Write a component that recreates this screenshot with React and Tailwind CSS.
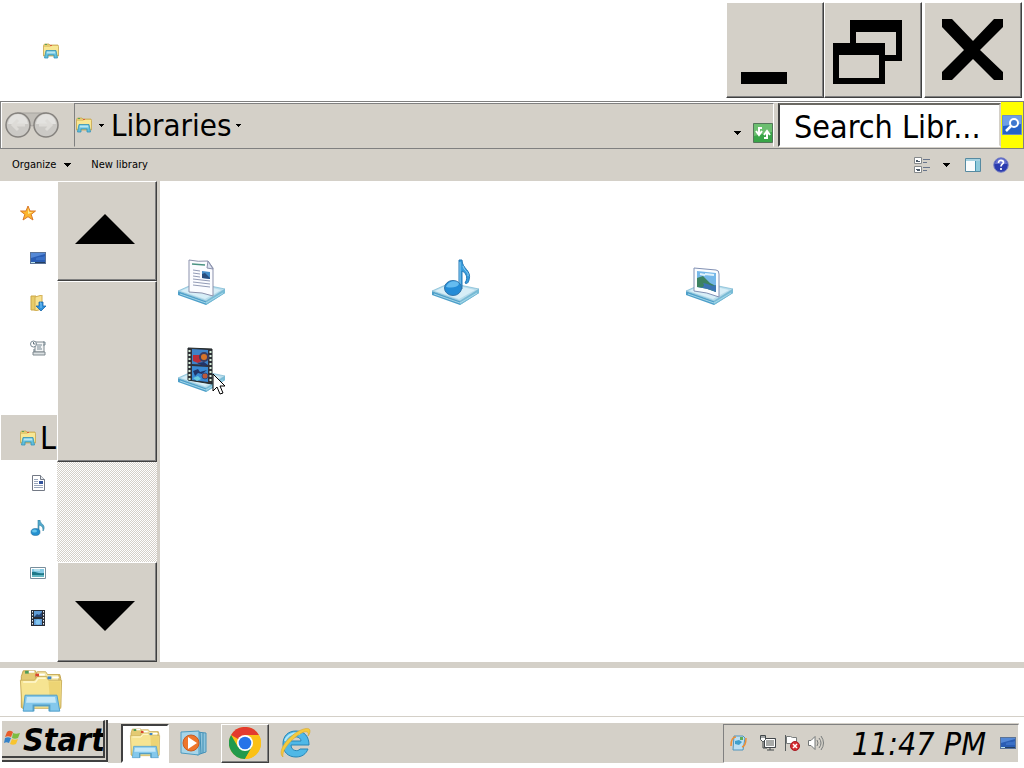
import React, { useState } from 'react';

const raised = 'border border-t-white border-l-white border-r-[#404040] border-b-[#404040] bg-[#d4d0c8] shadow-[inset_-1px_-1px_0_#808080]';
const sunken = 'border-2 border-t-[#404040] border-l-[#404040] border-r-white border-b-white';

const Caret = ({ className }) => (
  <svg viewBox="0 0 8 4" className={className} shapeRendering="crispEdges">
    <path d="M0 0h8L4 4z" fill="#000" />
  </svg>
);

const FolderIcon = ({ className }) => (
  <svg viewBox="0 0 48 48" className={className}>
    <path d="M3 9 5 3h13l2 4h24l1 4v31H3z" fill="#e3ca72" stroke="#c2a14c" />
    <path d="M18 8l2-4h9l2 3h12v8H18z" fill="#f4e8a8" stroke="#c9ab58" />
    <path d="M2 13h15l3-4h10l2 4h14l-1 30H4z" fill="#f6e492" stroke="#cbb05c" />
    <path d="M5 15h13l3-4h8" fill="none" stroke="#fff8cf" strokeWidth="1.5" />
    <path d="M32 14h13l-1 28H34z" fill="#eacd68" opacity=".7" />
    <path d="M7 3h4v3H7z" fill="#4e9b57" />
    <path d="M18 6h4v3h-4z" fill="#d9452f" />
    <path d="M31 9h4v3h-4z" fill="#3d85c9" />
    <path d="M22 7h6M36 10h7M11 4h6" stroke="#fff" strokeWidth="2" />
    <path d="M7 29h34l3 17H33v-6H16v6H5z" fill="#84c8ec" stroke="#4b9cc8" />
    <path d="M9 31h30l1 6H8z" fill="#c5e8f8" />
    <path d="M16 46v-6h17v6" fill="none" stroke="#559fc5" strokeWidth="2" />
  </svg>
);

const SmallFolderIcon = ({ className }) => (
  <svg viewBox="0 0 16 16" className={className}>
    <path d="M.5 2.500 1.500 1H6l1 1h8l.5 1.500V13h-15z" fill="#e5cb70" stroke="#c9a850" strokeWidth=".8" />
    <path d="M1 4h6l1-1h7v9H1z" fill="#f8e794" />
    <path d="M2 1.500h2" stroke="#5aa35c" />
    <path d="M7 2.500h2" stroke="#d9633f" />
    <path d="M3 7.500h10l1.500 7.500H11v-3H5v3H1.500z" fill="#62bfdc" stroke="#3292b8" strokeWidth=".8" strokeLinejoin="round" />
    <path d="M4 8.500h8l.5 2h-9z" fill="#b5e6f2" />
  </svg>
);

const StarIcon = ({ className }) => (
  <svg viewBox="0 0 16 16" className={className}>
    <path d="m8 1 2 5h5.500l-4.300 3.400 1.800 5.600-5-3.300L3 15l1.800-5.600L.5 6H6z" fill="#fdb62d" stroke="#d9792b" strokeLinejoin="round" />
    <path d="m8 3 1.200 4H13L8 9z" fill="#ffe98d" />
  </svg>
);

const DesktopIcon = ({ className }) => (
  <svg viewBox="0 0 16 16" className={className}>
    <path d="M0 2h16v12H0z" fill="#5b7397" />
    <path d="M1 3h14v9H1z" fill="#2a5db4" />
    <path d="M1 3h14v1L1 8z" fill="#5488d6" />
    <path d="M6 8c3-2 5 0 9-2v4H6z" fill="#3a70c6" />
    <path d="M1 12h14v1H1z" fill="#243f61" />
    <path d="M1 12h4v1H1z" fill="#b8e1ec" />
  </svg>
);

const DownloadsIcon = ({ className }) => (
  <svg viewBox="0 0 16 16" className={className}>
    <path d="M1 1h5v14H1z" fill="#e8cc68" stroke="#cba646" />
    <path d="M5 2 12 0v14l-7 2z" fill="#f8e291" stroke="#d2ae50" />
    <path d="M9 7h4v4h3l-5 5-5-5h3z" fill="#2e91dd" stroke="#1c68aa" strokeWidth=".8" />
    <path d="M10 8h1v5" fill="none" stroke="#7cc5f5" />
  </svg>
);

const RecentIcon = ({ className }) => (
  <svg viewBox="0 0 16 16" className={className}>
    <path d="M5 2h9v10H5z" fill="#f3f5f6" stroke="#7e898f" />
    <path d="M3 12h12v3H3z" fill="#dce1e3" stroke="#7e898f" />
    <path d="M13 2h2v3h-2M7 5h5M7 7h4M7 9h5" fill="none" stroke="#7b8b95" />
    <circle cx="3.500" cy="4" r="3" fill="#fff" stroke="#7b8a94" />
    <path d="M3.500 2v2h2M4 9v3" fill="none" stroke="#647680" />
  </svg>
);

const DocumentIcon = ({ className }) => (
  <svg viewBox="0 0 16 16" className={className}>
    <path d="M2.500.5h8l4 4v11h-12z" fill="#fff" stroke="#737985" />
    <path d="M10.500.5v4h4" fill="#e5e9ee" stroke="#737985" />
    <path d="M4 4.500h4M4 6.500h4M4 8.500h4M4 10.500h9M4 12.500h9" stroke="#9aa6bb" />
    <path d="M9 6h4v3H9z" fill="#34549c" />
  </svg>
);

const MusicIcon = ({ className }) => (
  <svg viewBox="0 0 16 16" className={className}>
    <path d="M8 12V0h2c0 4 5 4 4 9l-1 2c0-4-1-5-4-6v7z" fill="#53a9cd" stroke="#307f9e" strokeWidth=".6" />
    <ellipse cx="5.500" cy="12" rx="4.500" ry="3.500" fill="#2490cf" stroke="#246d9c" strokeWidth=".6" />
    <ellipse cx="4.500" cy="11" rx="2.500" ry="1.500" fill="#65c3eb" />
  </svg>
);

const PictureIcon = ({ className }) => (
  <svg viewBox="0 0 16 16" className={className}>
    <path d="M.5 2.500h15v11H.5z" fill="#fff" stroke="#788e9c" />
    <path d="M2 4h12v8H2z" fill="#85cae4" />
    <path d="M2 7c4-1 5 2 12 1v4H2z" fill="#1e7888" />
    <path d="M2 10h12v2H2z" fill="#63b6c1" />
    <path d="M4 5h6" stroke="#e1f5f7" />
  </svg>
);

const VideoIcon = ({ className }) => (
  <svg viewBox="0 0 16 16" className={className}>
    <path d="M1 0h14v16H1z" fill="#282c36" />
    <path d="M2.500 1v15M13.500 1v15" stroke="#f2f4f8" strokeDasharray="1.500 1.500" />
    <path d="M4 1h8v6H4zM4 9h8v6H4z" fill="#609cd7" />
    <path d="m4 7 3-3 2 1 3-3v5z" fill="#254675" />
    <circle cx="8" cy="12" r="2.500" fill="#83c6f0" />
  </svg>
);

const Tray = () => (
  <>
    <path d="M1 33v4l28 10 19-12v-4L29 43z" fill="#4d9fc9" />
    <path d="M29 43v4l19-12v-4z" fill="#78bcd6" />
    <path d="m1 33 18-8 29 6-19 12z" fill="#b8ddec" stroke="#79b6d1" strokeWidth=".7" />
    <path d="m4 33 15-7 25 6-16 9z" fill="#d7eef7" />
    <path d="m3 36 26 9 17-10" fill="none" stroke="#b5e0ef" strokeWidth=".8" />
  </>
);

const DocumentsLibrary = ({ className }) => (
  <svg viewBox="0 0 48 50" className={className}>
    <Tray />
    <path d="M12 2q9 2 19 1l5 7v28q-10-4-24-4z" fill="#fbfcff" stroke="#8b91ac" />
    <path d="m31 3-1 7 6 1z" fill="#dce2f0" stroke="#8b91ac" />
    <path d="m15 6 13 1" stroke="#4a9382" strokeWidth="1.500" />
    <path d="m16 12 7 1m-7 2 7 1m-7 2 7 1m-7 2 17 2m-17 1 17 2m-17 1 17 2" stroke="#929bb6" />
    <path d="m25 13 8 1v7l-8-1z" fill="#438bc7" />
    <path d="m25 16 3-1 5 5v1l-8-1z" fill="#284e7e" />
  </svg>
);

const MusicLibrary = ({ className }) => (
  <svg viewBox="0 0 48 50" className={className}>
    <Tray />
    <path d="M28 31V2h3c0 9 10 10 7 20-1 4-3 4-4 3 4-6 0-11-3-12v18z" fill="#389ddd" stroke="#2377b5" />
    <path d="M29 4v24M32 8c1 5 6 6 5 10" fill="none" stroke="#92cff0" />
    <ellipse cx="22" cy="30" rx="8.500" ry="7.500" fill="#238cd7" stroke="#3375aa" />
    <path d="M15 29c2-7 12-7 13-3-2 4-8 4-13 3z" fill="#65bcf0" />
  </svg>
);

const PicturesLibrary = ({ className }) => (
  <svg viewBox="0 0 48 50" className={className}>
    <Tray />
    <path d="m9 10 22 2q3 0 3 4v23q-12-5-25-6z" fill="#fbfdff" stroke="#8190b3" />
    <path d="m12 13 19 2v19q-9-4-19-5z" fill="#76b8e9" />
    <path d="m12 20 6-2 7 7 6 3v6q-9-4-19-5z" fill="#3c8261" />
    <path d="M18 25c7 1 8 4 13 2v7c-5-2-9-4-19-5 7 1 8-1 6-4z" fill="#3b75b3" />
    <path d="m20 16 9 1m-14-1 5 1" stroke="#dff2fc" strokeWidth="2" />
  </svg>
);

const VideosLibrary = ({ className }) => (
  <svg viewBox="0 0 48 50" className={className}>
    <Tray />
    <path d="m11 3 24 1v35L11 35z" fill="#303039" stroke="#222a2b" />
    <path d="M12.500 5v30M33.500 6v32" stroke="#d6eed9" strokeWidth="2" strokeDasharray="2 2" />
    <path d="m15 4 16 1v15l-16-1z" fill="#3e83c9" />
    <path d="m15 21 16 1v15l-16-2z" fill="#398ad4" />
    <path d="M16 10h7l2 6-4 2-5-2z" fill="#b92e39" />
    <circle cx="27" cy="12" r="4" fill="#d67428" stroke="#3c3d61" strokeWidth="2" />
    <path d="m20 18 7-1 4 3-5 1zM16 26l5-2 2 3 7-2-5 4-4-1-3 3z" fill="#223469" />
    <circle cx="28" cy="31" r="3" fill="#bc5839" stroke="#354b7d" />
    <path d="m16 33 5-2 3 3-4 2z" fill="#6acadf" />
  </svg>
);

const WindowsLogo = ({ className }) => (
  <svg viewBox="0 0 16 16" className={className}>
    <path d="M3 2c2-2 4-1 6 0L7 7C5 6 3 6 1 7z" fill="#e85c2b" />
    <path d="M9 3c2 1 4 1 7 0l-2 5c-2 1-4 1-6 0z" fill="#7dbd40" />
    <path d="M1 8c2-1 4-1 6 0l-2 5c-2-1-3-1-5 0z" fill="#3482c9" />
    <path d="M8 9c2 1 4 1 6 0l-2 5c-2 1-4 1-6 0z" fill="#f8c42e" />
  </svg>
);

const MediaPlayerIcon = ({ className }) => (
  <svg viewBox="0 0 28 28" className={className}>
    <path d="m17 3 9 1v19l-9 3z" fill="#8ec4dc" stroke="#4993b8" />
    <path d="m20 3 1 22m2-21v20" stroke="#3f8eb4" />
    <path d="m1 3 18-1v24L1 24z" fill="#a8d5e8" stroke="#4e9bbf" />
    <circle cx="11" cy="14" r="8" fill="#ef762b" stroke="#c65d25" />
    <path d="m8 8 9 6-9 6z" fill="#fff" />
  </svg>
);

const ChromeIcon = ({ className }) => (
  <svg viewBox="0 0 32 32" className={className}>
    <circle cx="16" cy="16" r="16" fill="#fbc116" />
    <path d="M16 16 2.100 8A16 16 0 0 1 29.900 8z" fill="#e33b2e" />
    <path d="M2.100 8a16 16 0 0 0 13.900 24l6.900-12H9z" fill="#229a4c" />
    <path d="M16 8h13.900A16 16 0 0 1 16 32l6.900-12z" fill="#fbc116" />
    <circle cx="16" cy="16" r="8" fill="#fff" />
    <circle cx="16" cy="16" r="6.300" fill="#2674e8" />
  </svg>
);

const ExplorerIcon = ({ className }) => (
  <svg viewBox="0 0 32 32" className={className}>
    <path d="M28 22c-2 5-6 8-12 8C8 30 3 25 3 17S8 4 16 4c9 0 13 6 13 14H11c0 6 7 7 9 4zM11 14h10c0-5-9-6-10 0z" fill="#4fb8e7" fillRule="evenodd" stroke="#2685b6" />
    <path d="M5 14c2-6 9-9 15-7" fill="none" stroke="#b0e8fa" strokeWidth="2" />
    <path d="M3 30C-3 25 6 12 17 5c7-4 13-5 13-1 0 2-1 4-2 5 1-3 0-5-4-4C15 8 1 23 3 30z" fill="#f5ca3d" stroke="#d9a72c" strokeWidth=".6" />
  </svg>
);

const BackForwardIcon = ({ className }) => (
  <svg viewBox="0 0 54 28" className={className}>
    <path d="M12 2h30v8l-15 5-15-5z" fill="#c1beb8" stroke="#a8a5a0" />
    <circle cx="13" cy="14" r="12" fill="#cbc9c5" stroke="#85827e" strokeWidth="1.500" />
    <circle cx="41" cy="14" r="12" fill="#cbc9c5" stroke="#85827e" strokeWidth="1.500" />
    <path d="M3 13a10 10 0 0 1 20 0zM31 13a10 10 0 0 1 20 0z" fill="#e3e2df" />
    <path d="M20 14H8m5-5-5 5 5 5" fill="none" stroke="#dddbd7" strokeWidth="3" />
    <path d="M34 14h12m-5-5 5 5-5 5" fill="none" stroke="#dddbd7" strokeWidth="3" />
  </svg>
);

const places = [
  { name: 'Favorites', icon: StarIcon, pad: 'pl-5' },
  { name: 'Desktop', icon: DesktopIcon, pad: 'pl-[30px]' },
  { name: 'Downloads', icon: DownloadsIcon, pad: 'pl-[30px]' },
  { name: 'Recent Places', icon: RecentIcon, pad: 'pl-[30px]' },
];

const libraries = [
  { name: 'Documents', icon: DocumentIcon, large: DocumentsLibrary },
  { name: 'Music', icon: MusicIcon, large: MusicLibrary },
  { name: 'Pictures', icon: PictureIcon, large: PicturesLibrary },
  { name: 'Videos', icon: VideoIcon, large: VideosLibrary },
];

const TitleBar = () => (
  <header className="flex h-[101px] shrink-0 items-start justify-between bg-white pt-[2px] pr-[2px]">
    <SmallFolderIcon className="mt-[41px] ml-[43px] h-4 w-4" />
    <div className="flex">
      <button aria-label="Minimize" className={`flex h-24 w-[98px] items-center pl-3 ${raised}`}>
        <svg viewBox="0 0 70 70" className="h-[70px] w-[70px]"><path d="M2 57h46v12H2z" /></svg>
      </button>
      <button aria-label="Restore" className={`mr-[2px] flex h-24 w-[98px] items-center pl-2 ${raised}`}>
        <svg viewBox="0 0 70 70" className="h-[70px] w-[70px]" shapeRendering="crispEdges">
          <path fillRule="evenodd" d="M17 5h52v41H52v-6h11V17H23v11h-6z" />
          <path fillRule="evenodd" d="M0 28h52v41H0zM6 40v23h40V40z" />
        </svg>
      </button>
      <button aria-label="Close" className={`flex h-24 w-[98px] items-center justify-center ${raised}`}>
        <svg viewBox="0 0 70 70" className="h-[70px] w-[70px]">
          <path d="M4 4h10l21 22L56 4h9v8L42 35l23 22v8h-9L35 44 14 65H4v-8l22-22L4 12z" />
        </svg>
      </button>
    </div>
  </header>
);

const AddressBar = () => {
  const [query, setQuery] = useState('');

  return (
    <div className="flex h-12 shrink-0 border border-[#808080] bg-[#d4d0c8] shadow-[inset_1px_1px_0_#fff]">
      <button aria-label="Back and forward" className="mr-[14px] ml-[3px] self-center">
        <BackForwardIcon className="h-7 w-14" />
      </button>
      <nav aria-label="Address" className="my-[1px] flex min-w-0 flex-1 items-center border border-t-[#808080] border-r-white border-b-[#d4d0c8] border-l-[#808080]">
        <SmallFolderIcon className="ml-[1px] h-4 w-4 shrink-0" />
        <button aria-label="Locations" className="mx-[7px]"><Caret className="h-[3px] w-[5px]" /></button>
        <a href="#libraries" className="text-[31px] leading-10">Libraries</a>
        <button aria-label="Libraries folders" className="ml-[5px]"><Caret className="h-[3px] w-[5px]" /></button>
        <button aria-label="Previous locations" className="mt-4 mr-3 ml-auto"><Caret className="h-1 w-2" /></button>
        <button aria-label="Refresh" className="mt-4 h-5 w-5 shrink-0">
          <svg viewBox="0 0 20 20">
            <path d="M.5.500h19v19H.5z" fill="#39a548" stroke="#54765a" />
            <path d="M1 1h18v8L1 13z" fill="#6cbf70" />
            <path d="M9 5H6v6m-3-3 3 4 3-4M11 15h3V9m-3 3 3-4 3 4" fill="none" stroke="#fff" strokeWidth="2" />
          </svg>
        </button>
      </nav>
      <form className="ml-1 flex w-[245px] shrink-0" onSubmit={(e) => e.preventDefault()}>
        <input
          aria-label="Search Libraries"
          placeholder="Search Libr..."
          value={query}
          onChange={(e) => setQuery(e.target.value)}
          className="my-[1px] min-w-0 flex-1 border-2 border-t-[#6b6963] border-r-[#d4d0c8] border-b-white border-l-[#404040] bg-white pt-[3px] pl-[14px] text-[32px] leading-10 outline-none placeholder:text-black"
        />
        <button aria-label="Search" className="flex w-[22px] items-center justify-center bg-[#ff0]">
          <svg viewBox="0 0 20 20" className="h-5 w-5">
            <path d="M.5.500h19v19H.5z" fill="#2563c8" stroke="#6d8fc5" />
            <path d="M1 1h18v8L1 11z" fill="#6d9fe6" />
            <circle cx="12" cy="8" r="4" fill="#3f78cf" stroke="#fff" strokeWidth="2" />
            <path d="m9 11-5 5" stroke="#fff" strokeWidth="2.500" />
          </svg>
        </button>
      </form>
    </div>
  );
};

const Toolbar = () => (
  <div className="flex h-8 shrink-0 items-center bg-[#d4d0c8] pr-[15px] pl-3 text-[11px]">
    <button className="mr-5 flex items-center gap-[7px]">Organize<Caret className="h-1 w-2" /></button>
    <button>New library</button>
    <button aria-label="Change your view" className="ml-auto">
      <svg viewBox="0 0 16 16" className="h-4 w-4">
        <path d="M.5.500h7v6h-7zM.5 9.500h7v6h-7z" fill="#fff" stroke="#85898b" />
        <path d="M2 4.500h4M2 12.500h4M2 3.500h2M3 13.500h3" stroke="#4b5967" />
        <path d="M9 2.500h7M9 5.500h4M9 10.500h7M9 13.500h4" stroke="#68758b" />
      </svg>
    </button>
    <button aria-label="More view options" className="mr-[15px] ml-3"><Caret className="h-1 w-2" /></button>
    <button aria-label="Show the preview pane" className="mr-3">
      <svg viewBox="0 0 16 16" className="h-4 w-4">
        <path d="M.5 1.500h15v13H.5z" fill="#f9fcfd" stroke="#568aa1" />
        <path d="M1 2h14v2H1z" fill="#a6d2e1" />
        <path d="M10.500 4v10" stroke="#4794b0" />
        <path d="M11 4h4v10h-4z" fill="#8fcadb" />
      </svg>
    </button>
    <button aria-label="Get help">
      <svg viewBox="0 0 16 16" className="h-4 w-4">
        <circle cx="8" cy="8" r="7.300" fill="#2b3caf" stroke="#8189c4" />
        <path d="M2 7a6 6 0 0 1 12 0z" fill="#6672cf" />
        <path d="M5.500 6c0-4 5-3 5-.5C10.500 7 8 7 8 9.500M8 11v2" fill="none" stroke="#fff" strokeWidth="1.700" />
      </svg>
    </button>
  </div>
);

const Sidebar = () => (
  <aside className="flex w-40 shrink-0 border-r-[3px] border-[#d4d0c8]">
    <nav aria-label="Folders" className="w-[57px] overflow-hidden pt-[9px]">
      {places.map(({ name, icon: Icon, pad }) => (
        <a key={name} href="#places" aria-label={name} className={`flex h-[45px] items-center ${pad}`}>
          <Icon className="h-4 w-4 shrink-0" />
        </a>
      ))}
      <a href="#libraries" className="mt-[45px] ml-[1px] flex h-[45px] items-center bg-[#d4d0c8] pl-[19px]">
        <SmallFolderIcon className="mr-1 h-4 w-4 shrink-0" />
        <span className="text-[32px] leading-10">L</span>
      </a>
      {libraries.map(({ name, icon: Icon }) => (
        <a key={name} href="#libraries" aria-label={name} className="flex h-[45px] items-center pl-[30px]">
          <Icon className="h-4 w-4 shrink-0" />
        </a>
      ))}
    </nav>
    <div className="flex w-[100px] flex-col bg-[repeating-conic-gradient(#d4d0c8_0_25%,#fff_0_50%)] bg-[length:2px_2px]">
      <button aria-label="Scroll up" className={`flex h-[100px] shrink-0 items-center justify-center pr-1 pb-1 ${raised}`}>
        <svg viewBox="0 0 60 30" className="h-[30px] w-[60px]"><path d="M30 0 60 30H0z" /></svg>
      </button>
      <div className={`h-[181px] shrink-0 ${raised}`} />
      <button aria-label="Scroll down" className={`mt-auto flex h-[100px] shrink-0 items-center justify-center pt-2 pr-1 ${raised}`}>
        <svg viewBox="0 0 60 30" className="h-[30px] w-[60px]"><path d="M0 0h60L30 30z" /></svg>
      </button>
    </div>
  </aside>
);

const Pointer = () => (
  <svg viewBox="0 0 14 22" className="absolute top-7 left-[35px] h-[22px] w-[14px]">
    <path d="M1 1v17l4-4 3 7 3-1-3-7h5z" fill="#fff" stroke="#000" />
  </svg>
);

const Taskbar = () => (
  <footer className="flex h-[51px] shrink-0 items-start bg-white pt-[3px] pr-[5px]">
    <div className="ml-[2px] flex h-[42px] w-[106px] shrink-0 items-start border-r-2 border-b-2 border-[#404040] bg-[#d4d0c8]">
      <button className="flex h-[38px] w-[103px] items-center overflow-hidden border-t border-r-2 border-b-2 border-t-white border-r-[#404040] border-b-[#404040] bg-[#d4d0c8] pt-[2px] pl-[2px] text-[32px] leading-10 font-bold italic">
        <WindowsLogo className="mr-[3px] mb-1 h-4 w-4 shrink-0" />
        Start
      </button>
    </div>
    <div className="mt-[3px] flex h-10 min-w-0 flex-1 items-center bg-[#d4d0c8] pl-[13px]">
      <button aria-label="Windows Explorer" className={`flex h-[39px] w-12 items-center justify-center bg-white ${sunken}`}>
        <FolderIcon className="h-8 w-8" />
      </button>
      <button aria-label="Windows Media Player" className="ml-[10px] px-[1px]">
        <MediaPlayerIcon className="h-7 w-7" />
      </button>
      <button aria-label="Google Chrome" className={`ml-3 flex h-[39px] w-12 items-center justify-center ${raised}`}>
        <ChromeIcon className="h-8 w-8" />
      </button>
      <button aria-label="Internet Explorer" className="ml-[11px]">
        <ExplorerIcon className="h-8 w-8" />
      </button>
      <div className="ml-auto flex h-[39px] w-[296px] items-center border border-t-[#808080] border-r-white border-b-white border-l-[#808080] pl-[6px]">
        <svg viewBox="0 0 18 18" className="h-[18px] w-[18px]">
          <path d="M4 2h9l2 2-2 12H3z" fill="#bedff1" stroke="#5095bd" />
          <path d="M1 12c0-6 2-9 5-9M16 4c0 5-1 8-4 9" fill="none" stroke="#ed8e36" strokeWidth="1.500" />
          <path d="m5 7 4-1 3 2-3 3-4-1z" fill="#3f9fcc" />
          <path d="M10 3h3v3h-3z" fill="#60ac59" />
        </svg>
        <svg viewBox="0 0 16 16" className="ml-3 h-4 w-4">
          <path d="M4.500 3.500h11v9h-11z" fill="#a8aaa8" stroke="#41464a" />
          <path d="M5.500 4.500h9v7h-9z" fill="none" stroke="#fff" />
          <path d="M3 6v7h4m0 2h7m-4-2v2" fill="none" stroke="#42494b" />
          <path d="M.5.500h5v4l-2 2h-1l-2-2z" fill="#fff" stroke="#42494b" />
          <path d="M2 0v3m2-3v3" stroke="#42494b" />
        </svg>
        <svg viewBox="0 0 16 16" className="ml-2 h-4 w-4">
          <path d="M1.500 0v16" stroke="#585d5e" />
          <path d="M2.500 1.500h4l2 1h4v7h-4l-2-1h-4z" fill="#fff" stroke="#777b7b" />
          <circle cx="11" cy="11" r="4.500" fill="#d52d31" stroke="#a71c25" />
          <path d="m9 9 4 4m0-4-4 4" stroke="#fff" strokeWidth="1.500" />
        </svg>
        <svg viewBox="0 0 16 16" className="ml-2 h-4 w-4">
          <path d="M.5 5.500H3l4-4v13l-4-4H.500z" fill="#fff" stroke="#737777" />
          <path d="M9 5q2 3 0 6M11 3q4 5 0 10M13 1q5 7 0 14" fill="none" stroke="#777b7b" />
        </svg>
        <time className="ml-auto pt-[2px] text-[32px] leading-9 whitespace-nowrap italic">11:47 PM</time>
        <button aria-label="Show desktop" className="mr-[2px] ml-[14px] shrink-0">
          <DesktopIcon className="h-4 w-4" />
        </button>
      </div>
    </div>
  </footer>
);

const App = () => {
  return (
    <div className="flex h-screen min-h-[640px] flex-col overflow-hidden bg-white font-['DejaVu_Sans_Condensed','Noto_Sans',sans-serif] text-black">
      <TitleBar />
      <AddressBar />
      <Toolbar />

      <div className="flex min-h-0 flex-1">
        <Sidebar />
        <main className="grid flex-1 auto-rows-[87px] grid-cols-[repeat(auto-fill,254px)] pt-[77px] pl-[17px]">
          {libraries.map(({ name, large: Large }) => (
            <a key={name} href="#libraries" aria-label={name} className="relative block h-[50px] w-12">
              <Large className="h-[50px] w-12" />
              {name === 'Videos' && <Pointer />}
            </a>
          ))}
        </main>
      </div>

      <section aria-label="Details" className="h-[55px] shrink-0 border-t-[6px] border-b border-[#d4d0c8] pl-[17px]">
        <FolderIcon className="h-12 w-12 pb-[3px]" />
      </section>
      <Taskbar />
    </div>
  );
};

export default App;
